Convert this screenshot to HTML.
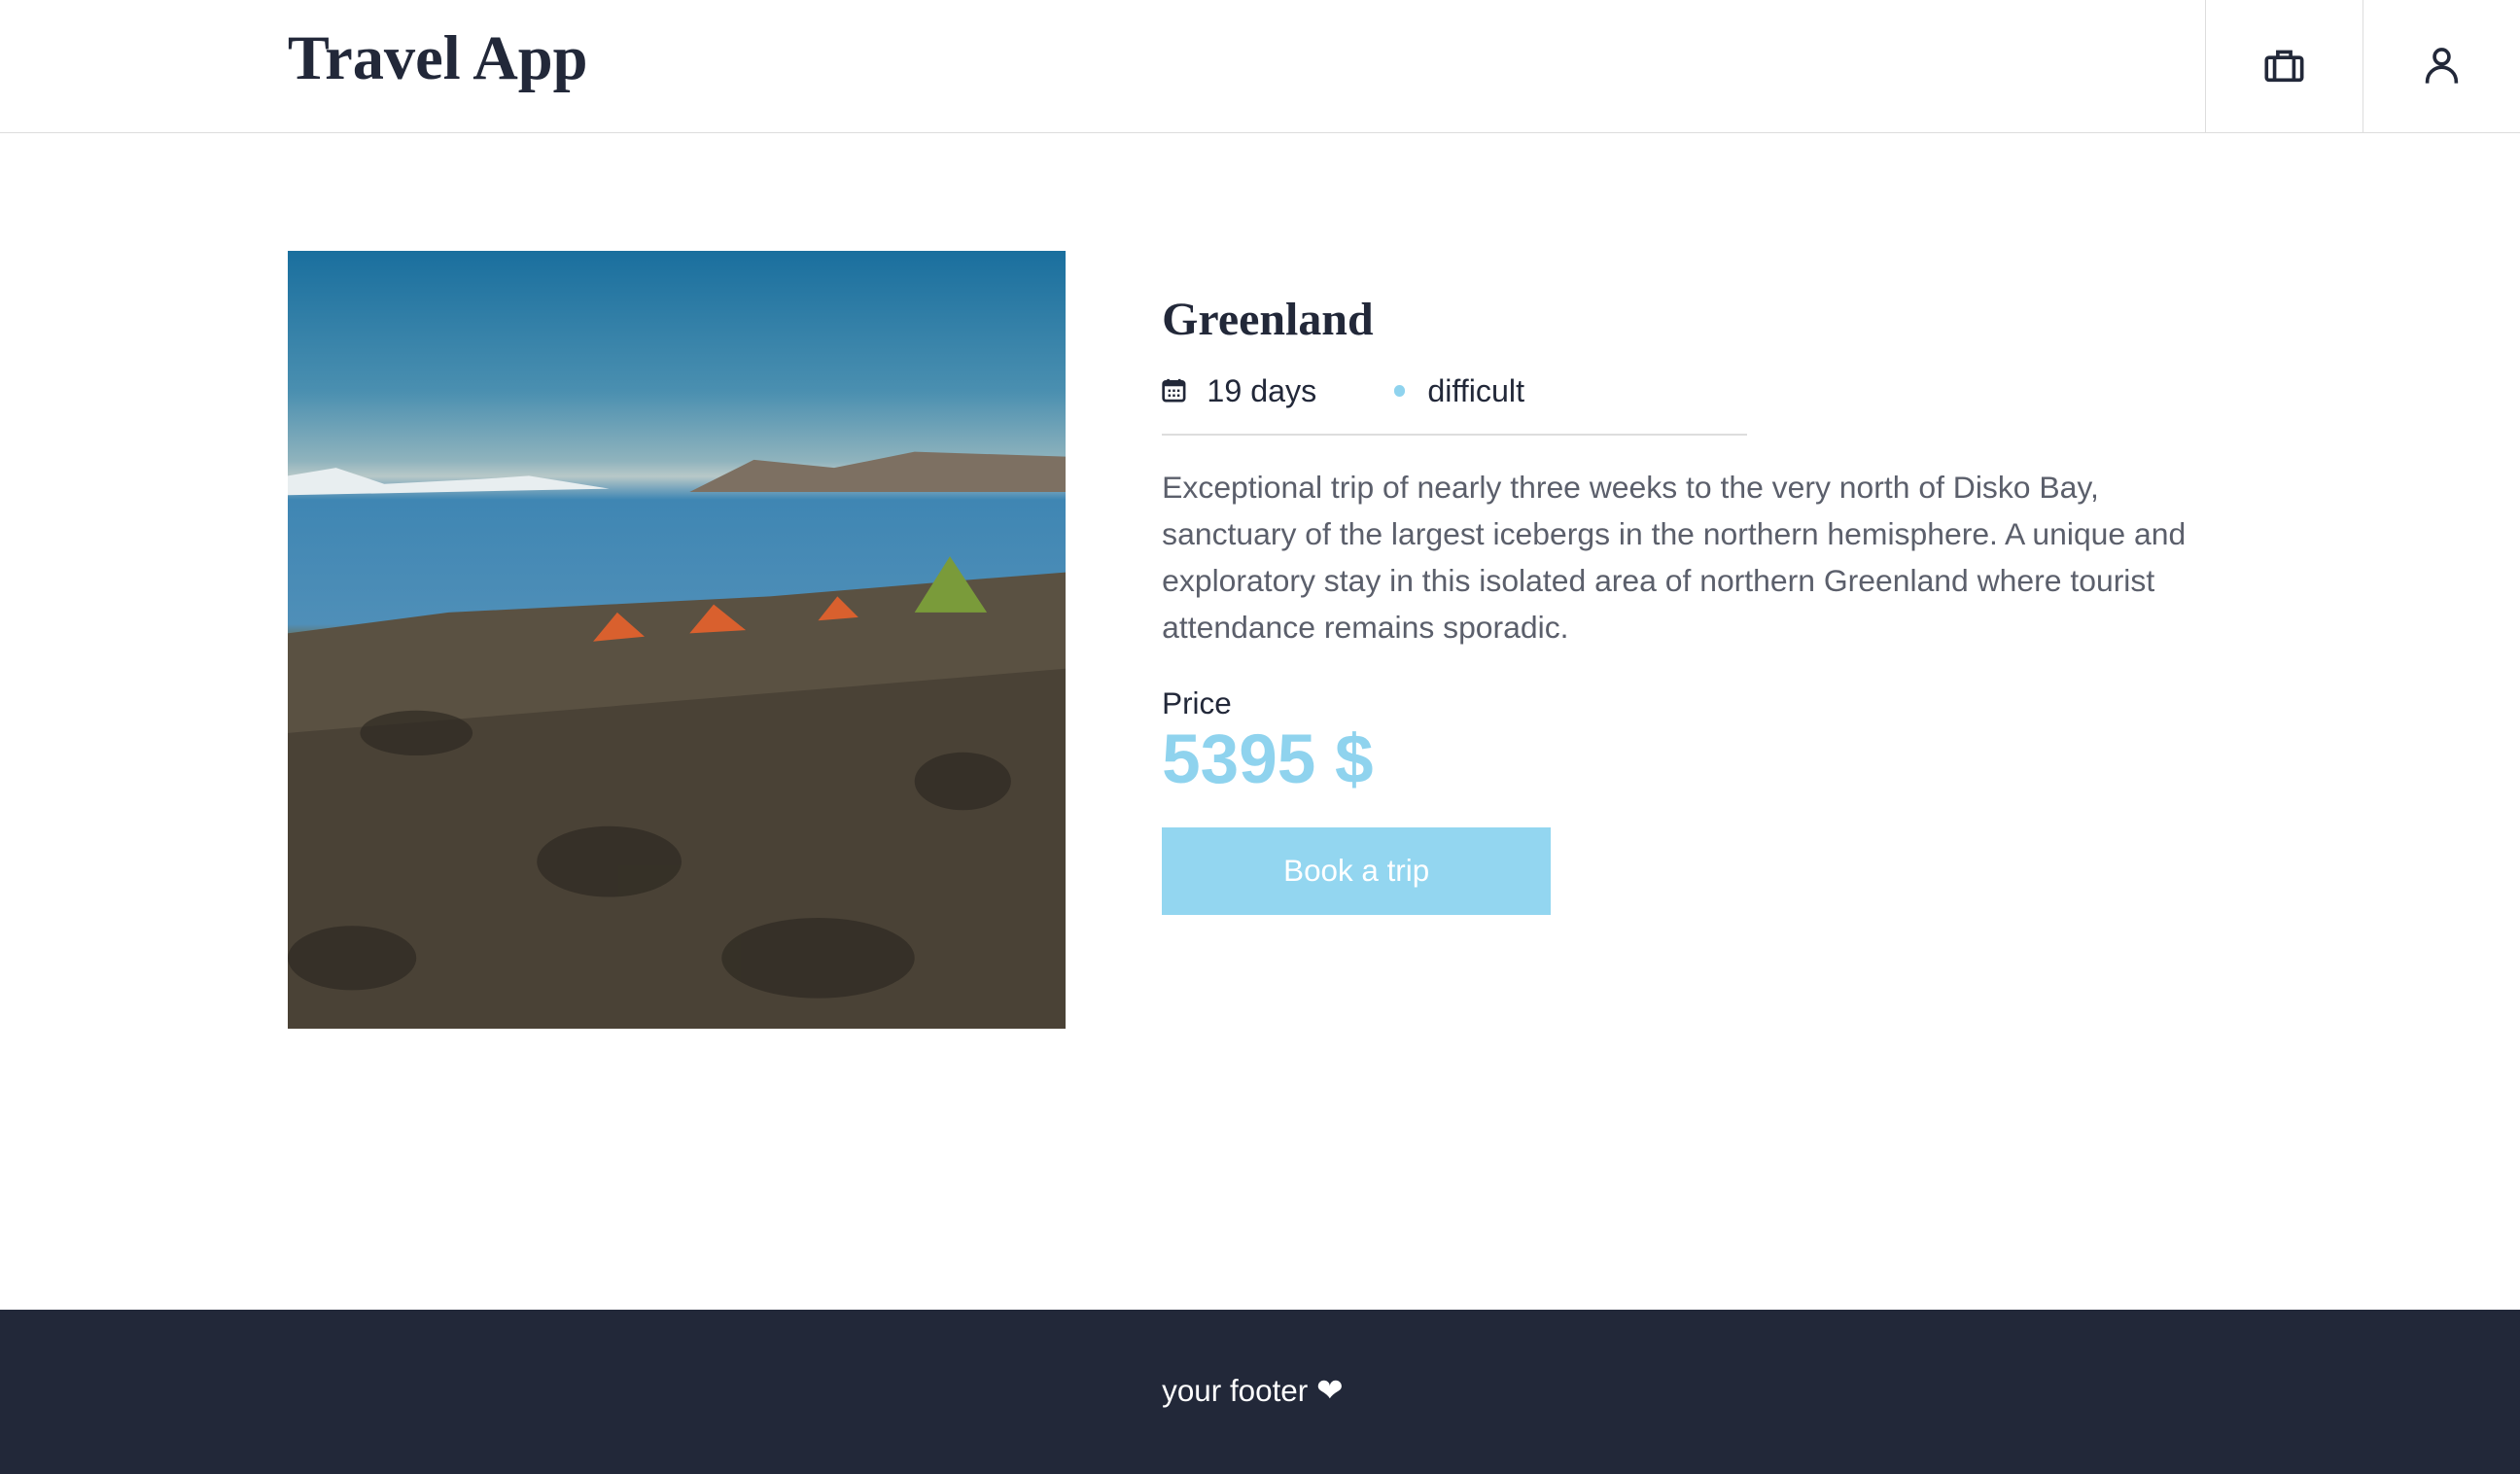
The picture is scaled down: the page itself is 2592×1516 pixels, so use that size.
<!DOCTYPE html>
<html><head><meta charset="utf-8"><style>
html{zoom:1.65306;height:917px;overflow:hidden}
body{margin:0;width:1568px;height:917px;position:relative;background:#fff;font-family:"Liberation Sans",Arial,sans-serif;color:#222839;overflow:hidden}
.hdr{position:absolute;left:0;top:0;width:1568px;height:82px;border-bottom:1px solid #ddd}
.logo{position:absolute;left:179px;top:14px;font:bold 39px "Liberation Serif",serif;color:#222839}
.cell{position:absolute;top:0;height:82px;width:97px;border-left:1px solid #ddd;display:flex;align-items:center;justify-content:center}
.img{position:absolute;left:179px;top:156px;width:484px;height:484px;overflow:hidden;background:linear-gradient(180deg,#1a6f9e 0%,#4a8fb0 18%,#8fb3bd 27%,#b8c8c8 29%,#3f86b3 32%,#4f8fb8 48%,#6b7055 50%,#5e5848 60%,#4a4234 75%,#3a3429 100%)}
h1{position:absolute;left:723px;top:182px;margin:0;font:bold 29px "Liberation Serif",serif;color:#222839}
.meta{position:absolute;left:723px;top:232px;font-size:19.5px;color:#222839}
.line{position:absolute;left:723px;top:270px;width:364px;height:1px;background:#ddd}
.desc{position:absolute;left:723px;top:289px;white-space:nowrap;font-size:19.3px;line-height:29px;color:#5b5f6b}
.pl{position:absolute;left:723px;top:427px;font-size:19px}
.price{position:absolute;left:723px;top:448px;font-size:43px;font-weight:bold;color:#8fd3ee}
.btn{position:absolute;left:723px;top:515px;width:242px;height:54px;background:#93d6f0;color:#fff;font-size:19px;display:flex;align-items:center;justify-content:center}
.ftr{position:absolute;left:0;top:815px;width:1568px;height:102px;background:#222839}
.ft{position:absolute;left:723px;top:38px;color:#fff;font-size:19px}
</style></head><body>
<div class="hdr"><div class="logo">Travel App</div>
<div class="cell" style="left:1372px"><svg width="26" height="26" viewBox="0 0 26 26" fill="none" stroke="#222839" stroke-width="2.2"><rect x="2" y="8" width="22" height="14" rx="1.5"/><path d="M7 8v14M19 8v14M9 8V4.5h8V8"/></svg></div>
<div class="cell" style="left:1470px"><svg width="26" height="26" viewBox="0 0 26 26" fill="none" stroke="#222839" stroke-width="2.2"><circle cx="13" cy="7.5" r="4.5"/><path d="M4 24v-1a9 9 0 0 1 18 0v1"/></svg></div>
</div>
<div class="img"><svg width="484" height="484" viewBox="0 0 484 484"><path d="M250 150 L290 130 L340 135 L390 125 L484 128 L484 150 Z" fill="#7d7062"/><path d="M0 140 L30 135 L60 145 L120 142 L150 140 L200 148 L0 152Z" fill="#e8eef0"/><path d="M0 238 L100 225 L200 220 L300 215 L420 205 L484 200 L484 484 L0 484Z" fill="#5a5142"/><path d="M0 300 L484 260 L484 484 L0 484Z" fill="#3f392e" opacity=".6"/><g fill="#2e2a22" opacity=".7"><ellipse cx="200" cy="380" rx="45" ry="22"/><ellipse cx="420" cy="330" rx="30" ry="18"/><ellipse cx="80" cy="300" rx="35" ry="14"/><ellipse cx="330" cy="440" rx="60" ry="25"/><ellipse cx="40" cy="440" rx="40" ry="20"/></g><path d="M390 225 L412 190 L435 225Z" fill="#7a9b3a"/><path d="M190 243 L205 225 L222 240Z" fill="#d9602e"/><path d="M250 238 L265 220 L285 236Z" fill="#d9602e"/><path d="M330 230 L342 215 L355 228Z" fill="#d9602e"/></svg></div>
<h1>Greenland</h1>
<div class="meta"><svg width="15" height="15" viewBox="0 0 15 15" style="vertical-align:-1px;margin-right:13px"><rect x="1" y="2" width="13" height="12" rx="1.5" fill="none" stroke="#222839" stroke-width="1.6"/><rect x="1" y="2" width="13" height="3" fill="#222839"/><path d="M4 0.5v3M11 0.5v3" stroke="#222839" stroke-width="1.6"/><g fill="#222839"><rect x="4" y="7" width="1.5" height="1.5"/><rect x="6.8" y="7" width="1.5" height="1.5"/><rect x="9.6" y="7" width="1.5" height="1.5"/><rect x="4" y="10" width="1.5" height="1.5"/><rect x="6.8" y="10" width="1.5" height="1.5"/><rect x="9.6" y="10" width="1.5" height="1.5"/></g></svg>19 days<span style="display:inline-block;width:7px;height:7px;border-radius:50%;background:#8fd3ee;margin:0 14px 3px 48px"></span>difficult</div>
<div class="line"></div>
<div class="desc">Exceptional trip of nearly three weeks to the very north of Disko Bay,<br>sanctuary of the largest icebergs in the northern hemisphere. A unique and<br>exploratory stay in this isolated area of northern Greenland where tourist<br>attendance remains sporadic.</div>
<div class="pl">Price</div>
<div class="price">5395 $</div>
<div class="btn">Book a trip</div>
<div class="ftr"><div class="ft">your footer <span style="font-size:20px">&#10084;</span></div></div>
</body></html>
